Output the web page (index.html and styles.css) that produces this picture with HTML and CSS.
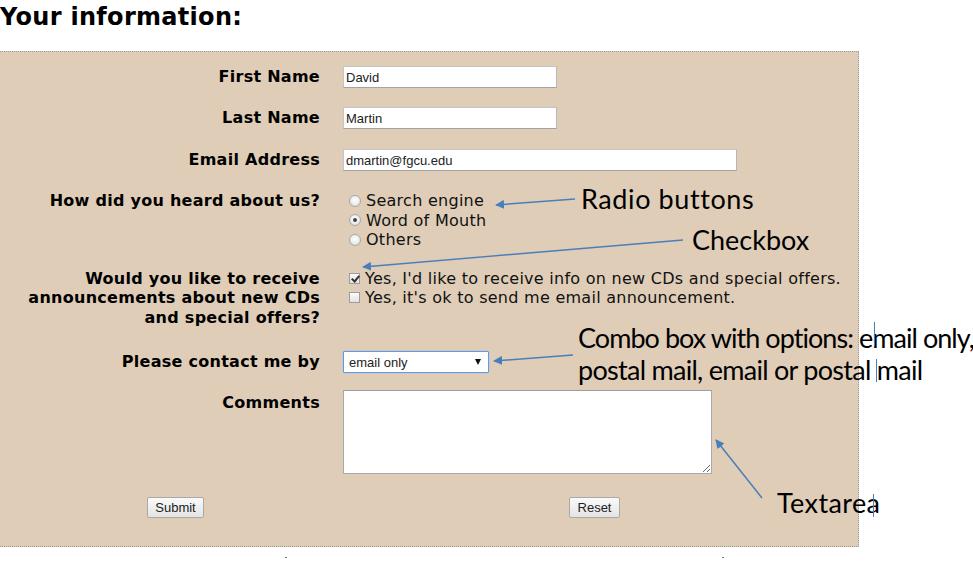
FILE: index.html
```html
<!DOCTYPE html>
<html lang="en">
<head>
<meta charset="utf-8">
<title>Your information</title>
<link rel="stylesheet" href="styles.css">
</head>
<body>
<div class="page">
  <h1 class="title">Your information:</h1>
  <form class="form-box">
    <div class="row row-1 mid">
      <label class="lbl" for="fn">First Name</label>
      <div class="cell"><input id="fn" class="txt short" type="text" value="David"></div>
    </div>
    <div class="row row-2 mid">
      <label class="lbl" for="ln">Last Name</label>
      <div class="cell"><input id="ln" class="txt short" type="text" value="Martin"></div>
    </div>
    <div class="row row-3 mid">
      <label class="lbl" for="em">Email Address</label>
      <div class="cell"><input id="em" class="txt long" type="text" value="dmartin@fgcu.edu"></div>
    </div>
    <div class="row row-4">
      <div class="lbl">How did you heard about us?</div>
      <div class="cell opts">
        <label class="opt"><input class="radio" type="radio" name="heard">Search engine</label>
        <label class="opt"><input class="radio" type="radio" name="heard" checked>Word of Mouth</label>
        <label class="opt"><input class="radio" type="radio" name="heard">Others</label>
      </div>
    </div>
    <div class="row row-5">
      <div class="lbl">Would you like to receive announcements about new CDs and special offers?</div>
      <div class="cell opts">
        <label class="opt"><input class="check" type="checkbox" checked>Yes, I'd like to receive info on new CDs and special offers.</label>
        <label class="opt"><input class="check" type="checkbox">Yes, it's ok to send me email announcement.</label>
      </div>
    </div>
    <div class="row row-6 mid">
      <label class="lbl" for="contact">Please contact me by</label>
      <div class="cell">
        <span class="select-wrap">
          <select id="contact" class="sel">
            <option>email only</option>
            <option>postal mail</option>
            <option>email or postal mail</option>
          </select>
        </span>
      </div>
    </div>
    <div class="row row-7">
      <label class="lbl lbl-top" for="comments">Comments</label>
      <div class="cell"><textarea id="comments" class="area"></textarea></div>
    </div>
    <div class="row row-8 mid">
      <div class="btn-cell first"><button type="submit" class="btn">Submit</button></div>
      <div class="btn-cell"><button type="reset" class="btn btn-reset">Reset</button></div>
    </div>
  </form>

  <div class="note note-radio">Radio buttons</div>
  <div class="note note-check">Checkbox</div>
  <div class="note note-combo"><span class="combo-1">Combo box with options: email only,</span><br>postal mail, email or postal mail</div>
  <div class="note note-area">Textarea</div>

  <svg class="arrows" width="973" height="573" viewBox="0 0 973 573" aria-hidden="true">
    <defs>
      <marker id="head" viewBox="0 0 10 10" refX="9" refY="5" markerWidth="9" markerHeight="9" markerUnits="userSpaceOnUse" orient="auto">
        <path d="M0 0 L10 5 L0 10 Z" fill="#4a7ebb"/>
      </marker>
    </defs>
    <g stroke="#4a7ebb" stroke-width="1.5" fill="none" marker-end="url(#head)">
      <line x1="575" y1="199" x2="496" y2="205"/>
      <line x1="683" y1="240" x2="363" y2="267"/>
      <line x1="573" y1="355" x2="494" y2="361"/>
      <line x1="762" y1="498" x2="716" y2="440"/>
    </g>
    <g stroke="#4a7ebb" stroke-width="1">
      <line x1="874.5" y1="322" x2="874.5" y2="346"/>
      <line x1="876.5" y1="359" x2="876.5" y2="382"/>
      <line x1="873.5" y1="494" x2="873.5" y2="517"/>
    </g>
    <rect x="285" y="557" width="2" height="1" fill="#4a7ebb"/>
    <rect x="722" y="557" width="2" height="1" fill="#4a7ebb"/>
  </svg>
</div>
</body>
</html>
```
FILE: styles.css
```css
html, body {
  margin: 0;
  padding: 0;
  background: #ffffff;
}

.page {
  position: relative;
  width: 973px;
  height: 573px;
  overflow: hidden;
  font-family: "DejaVu Sans", Verdana, sans-serif;
  color: #000;
}

.title {
  margin: 0 0 17px 0;
  font-size: 24px;
  letter-spacing: 0.3px;
  line-height: 34px;
  font-weight: bold;
  font-family: "DejaVu Sans", Verdana, sans-serif;
}

.form-box {
  box-sizing: border-box;
  width: 860px;
  margin-left: -1px;
  padding: 14px 9px 28px 0;
  background: #dfcdb8;
  border: 1px dotted #9a9a9a;
}

.row {
  display: grid;
  grid-template-columns: 340px 509px;
}
.row.mid { align-items: center; }

.row-2 { margin-top: 19px; }
.row-3 { margin-top: 20px; }
.row-4 { margin-top: 20px; }
.row-5 { margin-top: 19px; }
.row-6 { margin-top: 24px; }
.row-7 { margin-top: 17px; }
.row-8 { margin-top: 23px; }

.lbl {
  text-align: right;
  padding-right: 20px;
  font-size: 16px;
  letter-spacing: 0.27px;
  font-weight: bold;
  line-height: 19.5px;
}
.row-5 .lbl { padding-left: 20px; }
.lbl-top { padding-top: 3px; }

.cell {
  padding-left: 3px;
  display: flex;
  align-items: center;
}
.cell.opts {
  flex-direction: column;
  align-items: flex-start;
}

.txt {
  box-sizing: border-box;
  height: 22px;
  margin: 0;
  padding: 0 2px;
  border: 1px solid #c4c4c4;
  border-bottom-color: #a3a3a3;
  border-right-color: #b8b8b8;
  background: #fff;
  font-family: "Liberation Sans", Arial, sans-serif;
  font-size: 13px;
  color: #222;
  outline: none;
}
.txt.short { width: 214px; }
.txt.long { width: 394px; }

.opt {
  display: flex;
  align-items: center;
  font-size: 16px;
  letter-spacing: 0.27px;
  line-height: 19.5px;
  white-space: nowrap;
  color: #111;
}

.radio {
  appearance: none;
  -webkit-appearance: none;
  box-sizing: border-box;
  width: 12px;
  height: 12px;
  margin: 0 5px 0 6px;
  border: 1px solid #a8a8a8;
  border-radius: 50%;
  background: radial-gradient(circle at 50% 40%, #ffffff 0%, #f0f0f0 45%, #d4d4d4 100%);
  position: relative;
}
.radio:checked::after {
  content: "";
  position: absolute;
  left: 3px;
  top: 3px;
  width: 4px;
  height: 4px;
  border-radius: 50%;
  background: #444;
}

.check {
  appearance: none;
  -webkit-appearance: none;
  box-sizing: border-box;
  width: 11px;
  height: 11px;
  margin: 0 5px 0 6px;
  border: 1px solid #9c9c9c;
  background: linear-gradient(#fbfbfb, #e2e2e2);
  position: relative;
}
.check:checked::after {
  content: "";
  position: absolute;
  left: 3px;
  top: 0px;
  width: 3px;
  height: 6px;
  border: solid #333;
  border-width: 0 2px 2px 0;
  transform: rotate(40deg);
}

.select-wrap {
  position: relative;
  display: inline-block;
}
.select-wrap::after {
  content: "";
  position: absolute;
  right: 8px;
  top: 8px;
  border-left: 3.5px solid transparent;
  border-right: 3.5px solid transparent;
  border-top: 6px solid #111;
  pointer-events: none;
}
.sel {
  appearance: none;
  -webkit-appearance: none;
  box-sizing: border-box;
  width: 146px;
  height: 22px;
  margin: 0;
  padding: 0 0 0 5px;
  border: 1px solid #6b98d4;
  box-shadow: 0 0 0 0.5px #a9c3e8;
  border-radius: 1px;
  background: #fff;
  font-family: "Liberation Sans", Arial, sans-serif;
  font-size: 13px;
  color: #222;
  outline: none;
}

.area {
  box-sizing: border-box;
  width: 369px;
  height: 84px;
  margin: 0;
  border: 1px solid #a9a9a9;
  border-top-color: #9d9d9d;
  background: #fff;
  font-family: "Liberation Sans", Arial, sans-serif;
  font-size: 13px;
}

.btn-cell {
  display: flex;
  justify-content: center;
}
.btn-cell.first { padding-left: 11px; }

.btn {
  box-sizing: border-box;
  height: 21px;
  margin: 0;
  padding: 0 7px;
  border: 1px solid #a9a9a9;
  border-radius: 2px;
  background: linear-gradient(#fafafa, #e4e4e4);
  font-family: "Liberation Sans", Arial, sans-serif;
  font-size: 13px;
  color: #222;
}
.btn-reset { padding: 0 8px; }

.note {
  position: absolute;
  font-family: Lato, "Open Sans", sans-serif;
  font-size: 27px;
  line-height: 30px;
  color: #000;
  white-space: nowrap;
}
.note-radio { left: 581px; top: 184px; letter-spacing: 0.6px; }
.note-check { left: 692px; top: 225px; }
.note-combo { left: 578px; top: 322px; line-height: 32px; letter-spacing: -0.72px; }
.combo-1 { letter-spacing: -0.95px; }
.note-area { left: 777px; top: 488px; letter-spacing: 0.4px; }

.arrows {
  position: absolute;
  left: 0;
  top: 0;
  pointer-events: none;
}
```
